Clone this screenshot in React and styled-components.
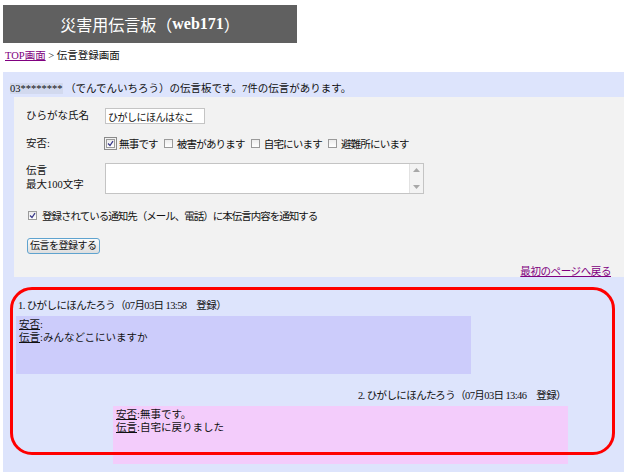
import styled, { createGlobalStyle } from "styled-components";

const GlobalStyle = createGlobalStyle`
    body {
        margin: 0;
        background: #ffffff;
        font-family: "Liberation Serif", "Noto Sans CJK JP", serif;
        font-size: 10.5px;
        color: #111111;
    }
`

const messages = [
    { id: 1, name: "ひがしにほんたろう", date: "07月03日 13:58", safety: "", text: "みんなどこにいますか", side: "left" },
    { id: 2, name: "ひがしにほんたろう", date: "07月03日 13:46", safety: "無事です。", text: "自宅に戻りました", side: "right" },
];

const options = [
    { label: "無事です", checked: true },
    { label: "被害があります", checked: false },
    { label: "自宅にいます", checked: false },
    { label: "避難所にいます", checked: false },
];

const CheckBox = ({ checked, focused }) => (
    <Box $focused={focused}>
        {checked &&
            <svg width="7" height="7" viewBox="0 0 7 7">
                <path d="M1 3.5 L3 5.5 L6 1.2" fill="none" stroke="#3a3a8a" strokeWidth="1.3" />
            </svg>
        }
    </Box>
);

const Arrow = ({ up }) => (
    <svg width="7" height="4" viewBox="0 0 7 4">
        <path d={up ? "M0 4 L3.5 0 L7 4 Z" : "M0 0 L3.5 4 L7 0 Z"} fill="#a8a8a8" />
    </svg>
);

const App = () => {
    return (
        <Page>
            <GlobalStyle />
            <TitleBar>災害用伝言板（<b>web171</b>）</TitleBar>
            <Crumbs>
                <Link href="#">TOP画面</Link> &gt; 伝言登録画面
            </Crumbs>
            <Board>
                <Intro>
                    <Phone>03********</Phone> （でんでんいちろう）の伝言板です。7件の伝言があります。
                </Intro>
                <FormPanel>
                    <FormGrid>
                        <Label>ひらがな氏名</Label>
                        <NameInput defaultValue="ひがしにほんはなこ" />
                        <Label>安否:</Label>
                        <Choices>
                            {options.map((o, i) => (
                                <Choice key={o.label}>
                                    <CheckBox checked={o.checked} focused={i === 0} />
                                    {o.label}
                                </Choice>
                            ))}
                        </Choices>
                        <Label $top>伝言<br />最大100文字</Label>
                        <AreaFrame>
                            <MessageArea />
                            <ScrollTrack>
                                <Arrow up />
                                <Arrow />
                            </ScrollTrack>
                        </AreaFrame>
                    </FormGrid>
                    <Notify>
                        <CheckBox checked />
                        登録されている通知先（メール、電話）に本伝言内容を通知する
                    </Notify>
                    <SubmitBtn>伝言を登録する</SubmitBtn>
                    <BackRow>
                        <Link href="#">最初のページへ戻る</Link>
                    </BackRow>
                </FormPanel>
                <MessageList>
                    {messages.map((m) => (
                        <Message key={m.id} $side={m.side}>
                            <MessageHead $side={m.side}>
                                {m.id}. {m.name}（{m.date}　登録）
                            </MessageHead>
                            <MessageBody $side={m.side}>
                                <div><u>安否</u>:{m.safety}</div>
                                <div><u>伝言</u>:{m.text}</div>
                            </MessageBody>
                        </Message>
                    ))}
                    <Highlight />
                </MessageList>
            </Board>
        </Page>
    )
};

const Page = styled.div`
    padding: 5px 0 0 3px;
    height: 467px;
    overflow: hidden;
`

const TitleBar = styled.div`
    width: 294px;
    height: 38px;
    background: #606060;
    color: #ffffff;
    font-size: 16px;
    display: flex;
    align-items: center;
    justify-content: center;

    b {
        font-weight: bold;
    }
`

const Crumbs = styled.div`
    height: 13px;
    margin: 6px 0 0 2px;
    line-height: 13px;
`

const Link = styled.a`
    color: #800080;
    text-decoration: underline;
`

const Board = styled.div`
    margin-top: 10px;
    background: #dde4fc;
    padding-top: 10px;
    min-height: 420px;
`

const Intro = styled.div`
    height: 13px;
    line-height: 13px;
    padding-left: 7px;
`

const Phone = styled.span`
    background: #d2d9ee;
`

const FormPanel = styled.div`
    margin: 2px 0 0 11px;
    background: #f2f2f2;
    padding: 11px 13px 4px 12px;
    height: 165px;
`

const FormGrid = styled.div`
    display: grid;
    grid-template-columns: 79px auto;
    row-gap: 12px;
    align-items: center;
`

const Label = styled.div`
    align-self: ${props => props.$top ? "start" : "center"};
    line-height: 14px;
    padding-top: ${props => props.$top ? "1px" : "0"};
`

const NameInput = styled.input`
    width: 94px;
    height: 14px;
    padding: 0 2px;
    border: 1px solid #c4c4c4;
    font: inherit;
    font-size: 10px;
    letter-spacing: -0.5px;
    color: #111111;
`

const Choices = styled.div`
    display: flex;
    align-items: center;
    gap: 5px;
    letter-spacing: -0.8px;
`

const Choice = styled.span`
    display: flex;
    align-items: center;
    gap: 3px;
`

const Box = styled.span`
    width: 9px;
    height: 9px;
    border: 1px solid #9a9a9a;
    background: linear-gradient(#ececec, #ffffff);
    display: inline-flex;
    align-items: center;
    justify-content: center;
    box-sizing: border-box;
    outline: ${props => props.$focused ? "1px solid #8a8a8a" : "none"};
    outline-offset: 1px;
    margin: 0 1px;
`

const AreaFrame = styled.div`
    width: 319px;
    height: 31px;
    box-sizing: border-box;
    border: 1px solid #c4c4c4;
    background: #ffffff;
    display: flex;
`

const MessageArea = styled.textarea`
    flex: 1;
    border: none;
    outline: none;
    resize: none;
    padding: 1px 2px;
    font: inherit;
    background: transparent;
`

const ScrollTrack = styled.div`
    width: 14px;
    background: #f3f3f3;
    border-left: 1px solid #e2e2e2;
    display: flex;
    flex-direction: column;
    align-items: center;
    justify-content: space-between;
    padding: 4px 0;
    box-sizing: border-box;
`

const Notify = styled.div`
    margin-top: 14px;
    display: flex;
    align-items: center;
    gap: 4px;
    padding-left: 1px;
    letter-spacing: -1px;
`

const SubmitBtn = styled.button`
    margin: 15px 0 0 1px;
    height: 16px;
    padding: 0 2px;
    border: 1px solid #5fa3cf;
    border-radius: 3px;
    background: linear-gradient(#fbfbfb, #dedede);
    font: inherit;
    font-size: 10px;
    letter-spacing: -0.5px;
    line-height: 12px;
    color: #111111;
`

const BackRow = styled.div`
    margin-top: 11px;
    text-align: right;
    line-height: 13px;
    letter-spacing: -0.4px;
`

const MessageList = styled.div`
    position: relative;
    padding: 22px 0 12px 13px;
    width: 552px;
    display: flex;
    flex-direction: column;
    gap: 15px;
`

const Message = styled.div`
    width: 455px;
    align-self: ${props => props.$side === "right" ? "flex-end" : "flex-start"};
`

const MessageHead = styled.div`
    line-height: 14px;
    padding: 0 2px 3px;
    letter-spacing: -0.6px;
    text-align: ${props => props.$side === "right" ? "right" : "left"};
`

const MessageBody = styled.div`
    height: 58px;
    box-sizing: border-box;
    padding: 2px 3px;
    line-height: 13px;
    background: ${props => props.$side === "right" ? "#f3ccfb" : "#ccccfb"};
`

const Highlight = styled.div`
    position: absolute;
    left: 7px;
    top: 10px;
    width: 605px;
    height: 168px;
    box-sizing: border-box;
    border: 3px solid #ff0000;
    border-radius: 22px;
    pointer-events: none;
`

export default App
